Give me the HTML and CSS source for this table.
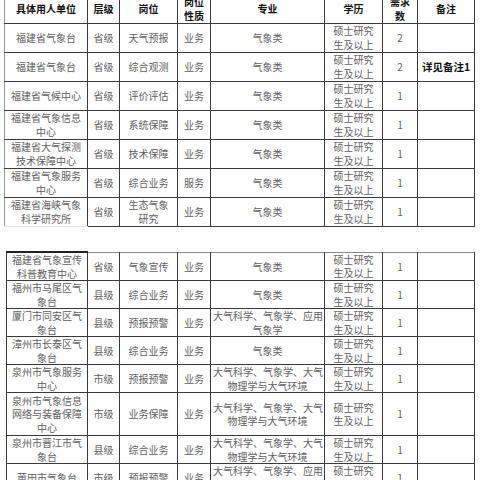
FILE: index.html
```html
<!DOCTYPE html>
<html lang="zh-CN">
<head>
<meta charset="utf-8">
<title>岗位表</title>
<link rel="stylesheet" href="styles.css">
</head>
<body>
<div class="page">
  <table class="tbl tbl-top">
    <colgroup>
      <col class="c1"><col class="c2"><col class="c3"><col class="c4"><col class="c5"><col class="c6"><col class="c7"><col class="c8">
    </colgroup>
    <tr class="head">
      <th>具体用人单位</th><th>层级</th><th>岗位</th><th>岗位<br>性质</th><th>专业</th><th>学历</th><th>需求<br>数</th><th>备注</th>
    </tr>
    <tr><td>福建省气象台</td><td>省级</td><td>天气预报</td><td>业务</td><td>气象类</td><td>硕士研究<br>生及以上</td><td>2</td><td></td></tr>
    <tr><td>福建省气象台</td><td>省级</td><td>综合观测</td><td>业务</td><td>气象类</td><td>硕士研究<br>生及以上</td><td>2</td><td class="note">详见备注1</td></tr>
    <tr><td>福建省气候中心</td><td>省级</td><td>评价评估</td><td>业务</td><td>气象类</td><td>硕士研究<br>生及以上</td><td>1</td><td></td></tr>
    <tr><td>福建省气象信息<br>中心</td><td>省级</td><td>系统保障</td><td>业务</td><td>气象类</td><td>硕士研究<br>生及以上</td><td>1</td><td></td></tr>
    <tr><td>福建省大气探测<br>技术保障中心</td><td>省级</td><td>技术保障</td><td>业务</td><td>气象类</td><td>硕士研究<br>生及以上</td><td>1</td><td></td></tr>
    <tr><td>福建省气象服务<br>中心</td><td>省级</td><td>综合业务</td><td>服务</td><td>气象类</td><td>硕士研究<br>生及以上</td><td>1</td><td></td></tr>
    <tr class="last"><td class="nobottom">福建省海峡气象<br>科学研究所</td><td>省级</td><td>生态气象<br>研究</td><td>业务</td><td>气象类</td><td>硕士研究<br>生及以上</td><td>1</td><td></td></tr>
  </table>

  <table class="tbl tbl-bottom">
    <colgroup>
      <col class="c1b"><col class="c2"><col class="c3"><col class="c4"><col class="c5"><col class="c6"><col class="c7"><col class="c8">
    </colgroup>
    <tr class="first"><td class="darktop">福建省气象宣传<br>科普教育中心</td><td>省级</td><td>气象宣传</td><td>业务</td><td>气象类</td><td>硕士研究<br>生及以上</td><td>1</td><td></td></tr>
    <tr><td>福州市马尾区气<br>象台</td><td>县级</td><td>综合业务</td><td>业务</td><td>气象类</td><td>硕士研究<br>生及以上</td><td>1</td><td></td></tr>
    <tr><td>厦门市同安区气<br>象台</td><td>县级</td><td>预报预警</td><td>业务</td><td>大气科学、气象学、应用<br>气象学</td><td>硕士研究<br>生及以上</td><td>1</td><td></td></tr>
    <tr><td>漳州市长泰区气<br>象台</td><td>县级</td><td>综合业务</td><td>业务</td><td>气象类</td><td>硕士研究<br>生及以上</td><td>1</td><td></td></tr>
    <tr><td>泉州市气象服务<br>中心</td><td>市级</td><td>预报预警</td><td>业务</td><td>大气科学、气象学、大气<br>物理学与大气环境</td><td>硕士研究<br>生及以上</td><td>1</td><td></td></tr>
    <tr class="tall"><td>泉州市气象信息<br>网络与装备保障<br>中心</td><td>市级</td><td>业务保障</td><td>业务</td><td>大气科学、气象学、大气<br>物理学与大气环境</td><td>硕士研究<br>生及以上</td><td>1</td><td></td></tr>
    <tr class="short"><td>泉州市晋江市气<br>象台</td><td>县级</td><td>综合业务</td><td>业务</td><td>大气科学、气象学、大气<br>物理学与大气环境</td><td>硕士研究<br>生及以上</td><td>1</td><td></td></tr>
    <tr><td>莆田市气象台</td><td>市级</td><td>预报预警</td><td>业务</td><td>大气科学、气象学、应用<br>气象学</td><td>硕士研究<br>生及以上</td><td>1</td><td></td></tr>
  </table>
</div>
</body>
</html>
```

FILE: styles.css
```css
html, body {
  margin: 0;
  padding: 0;
  background: #ffffff;
}

.page {
  width: 480px;
  height: 480px;
  overflow: hidden;
  font-family: "Noto Sans CJK SC", "Noto Sans", sans-serif;
  color: #5e5e5e;
}

.tbl {
  border-collapse: collapse;
  table-layout: fixed;
  font-size: 10px;
  line-height: 14px;
}

.tbl-top {
  width: 470px;
  margin: -5px 0 0 4px;
}

.tbl-bottom {
  width: 468px;
  margin: 24px 0 0 6px;
  line-height: 13.5px;
}

.c1 { width: 83px; }
.c1b { width: 81px; }
.c2 { width: 32px; }
.c3 { width: 58px; }
.c4 { width: 33px; }
.c5 { width: 114px; }
.c6 { width: 58px; }
.c7 { width: 35px; }
.c8 { width: 57px; }

.tbl th,
.tbl td {
  border: 1px solid #3a3a3a;
  padding: 0 2px;
  text-align: center;
  vertical-align: middle;
  overflow: hidden;
  white-space: nowrap;
}

.tbl td {
  height: 27.5px;
}

.tbl-bottom td {
  height: 27px;
}

.tbl th {
  height: 27px;
  color: #111111;
  font-weight: 700;
  border-top: none;
}

.tbl-top td:first-child,
.tbl-top th:first-child {
  border-left-color: #9a9a9a;
}

.tbl-top td.nobottom {
  border-bottom-color: #e6e6e6;
}

.tbl-bottom tr.first td {
  border-top-color: #888888;
}

.tbl-bottom tr.first td.darktop {
  border-top: 2px solid #222222;
}

.tbl-bottom tr.tall td {
  height: 42px;
}

.tbl-bottom tr.short td {
  height: 26px;
}

.tbl td.note {
  color: #111111;
  font-weight: 700;
  font-size: 10.5px;
}
```
